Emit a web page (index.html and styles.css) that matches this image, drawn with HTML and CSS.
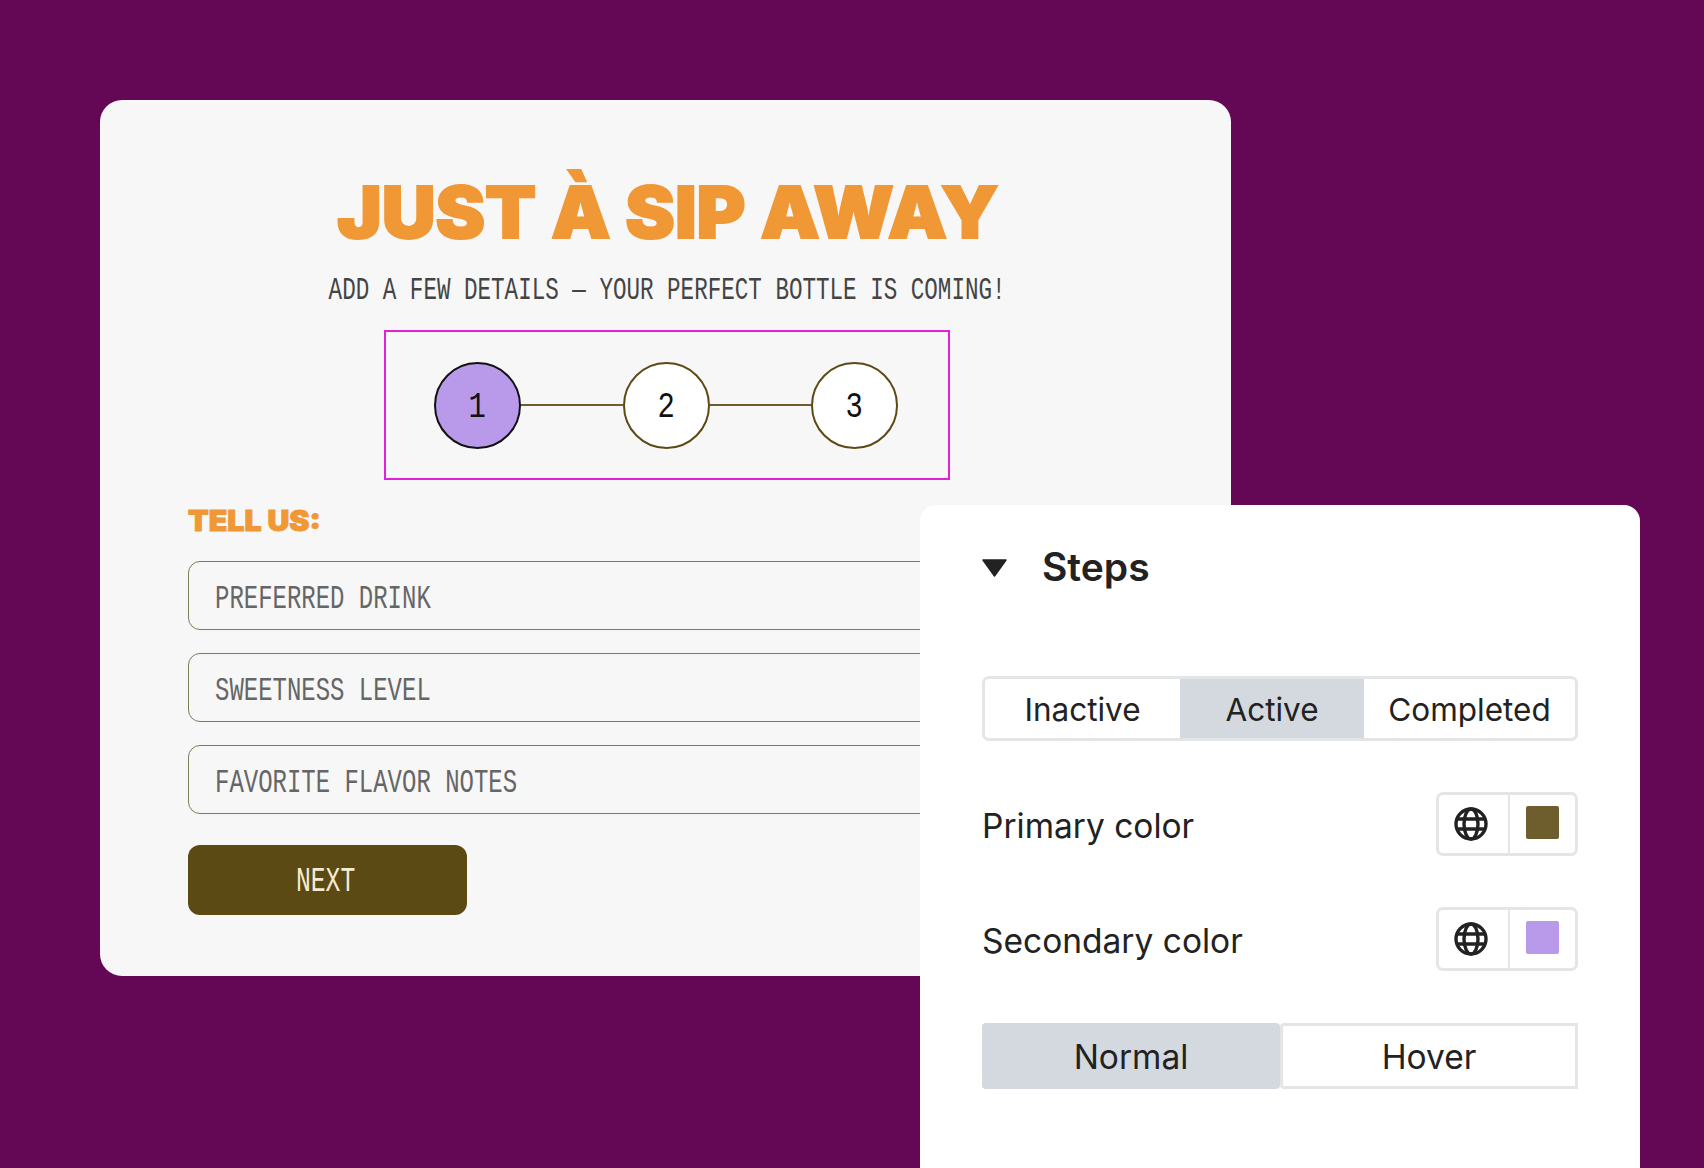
FILE: index.html
```html
<!DOCTYPE html>
<html lang="en">

<head>
    <meta charset="UTF-8">
    <meta name="viewport" content="width=device-width, initial-scale=1.0">
    <title>Steps</title>
    <link rel="stylesheet" href="styles.css">
</head>

<body>
    <div class="form-card">
        <h1><span class="title-text">JUST À SIP AWAY</span></h1>
        <p class="subtitle"><span class="squeeze">ADD A FEW DETAILS — YOUR PERFECT BOTTLE IS COMING!</span></p>
        <div class="stepper">
            <div class="step step-active"><span class="squeeze">1</span></div>
            <div class="step-line"></div>
            <div class="step"><span class="squeeze">2</span></div>
            <div class="step-line"></div>
            <div class="step"><span class="squeeze">3</span></div>
        </div>
        <h2><span class="title-text">TELL US:</span></h2>
        <div class="field"><span class="squeeze">PREFERRED DRINK</span></div>
        <div class="field"><span class="squeeze">SWEETNESS LEVEL</span></div>
        <div class="field"><span class="squeeze">FAVORITE FLAVOR NOTES</span></div>
        <button class="next-btn"><span class="squeeze">NEXT</span></button>
    </div>

    <div class="panel">
        <div class="panel-title">
            <svg class="caret" viewBox="0 0 25 18"><path d="M1 1 H24 L12.5 17 Z" stroke="#222" stroke-width="1.5" stroke-linejoin="round" fill="#222"/></svg>
            <span>Steps</span>
        </div>
        <div class="tabs">
            <div class="tab tab-inactive">Inactive</div>
            <div class="tab tab-active">Active</div>
            <div class="tab tab-completed">Completed</div>
        </div>
        <div class="color-row">
            <span>Primary color</span>
            <div class="color-picker">
                <div class="globe-cell">
                    <svg class="globe" viewBox="0 0 34 34"><circle cx="17" cy="17" r="15"/><ellipse cx="17" cy="17" rx="7" ry="15"/><path d="M3 12 H31 M3 22 H31"/></svg>
                </div>
                <div class="swatch-cell"><div class="swatch swatch-primary"></div></div>
            </div>
        </div>
        <div class="color-row color-row-second">
            <span>Secondary color</span>
            <div class="color-picker">
                <div class="globe-cell">
                    <svg class="globe" viewBox="0 0 34 34"><circle cx="17" cy="17" r="15"/><ellipse cx="17" cy="17" rx="7" ry="15"/><path d="M3 12 H31 M3 22 H31"/></svg>
                </div>
                <div class="swatch-cell"><div class="swatch swatch-secondary"></div></div>
            </div>
        </div>
        <div class="state-toggle">
            <div class="state state-on">Normal</div>
            <div class="state state-off">Hover</div>
        </div>
    </div>
</body>

</html>
```

FILE: styles.css
```css
body {
    margin: 0;
    height: 1168px;
    overflow: hidden;
    position: relative;
    background-color: #640856;
    font-family: Inter, "Noto Sans", sans-serif;
    color: #222;
}

/* mono text in the reference is narrower than Liberation Mono */
.squeeze {
    display: inline-block;
    white-space: nowrap;
    transform: scaleX(0.705);
}

/* and the display face is wider than Inter black */
.title-text {
    display: inline-block;
    white-space: nowrap;
    transform: scaleX(1.05);
}

.form-card {
    box-sizing: border-box;
    width: 1131px;
    height: 876px;
    margin: 100px 0 0 100px;
    padding: 0 81px 0 88px;
    background-color: #f7f7f7;
    border-radius: 22px;
    font-family: "Liberation Mono", monospace;
}

h1 {
    margin: 0 0 0 -2px;
    padding-top: 69px;
    text-align: center;
    font-family: Inter, sans-serif;
    font-weight: 900;
    font-size: 71px;
    line-height: 86px;
    color: #f09835;
    -webkit-text-stroke: 2px #f09835;
}

.subtitle {
    margin: 20px 0 0 -4px;
    text-align: center;
    font-size: 32px;
    line-height: 32px;
    color: #444;
}

.stepper {
    box-sizing: border-box;
    width: 566px;
    height: 150px;
    margin: 23px 0 0 196px;
    padding: 0 50px 0 48px;
    display: flex;
    align-items: center;
    border: 2px solid #e021d6;
}

.step {
    box-sizing: border-box;
    flex: none;
    width: 87px;
    height: 87px;
    padding-top: 3px;
    display: flex;
    align-items: center;
    justify-content: center;
    border: 2px solid #5c4a15;
    border-radius: 50%;
    background-color: #fff;
    font-size: 37px;
    color: #111;
}

.step .squeeze {
    transform: scaleX(0.78);
}

.step-active {
    background-color: #b899ea;
    border-color: #111;
}

.step-line {
    flex: 1;
    height: 2px;
    background-color: #6f5e2d;
}

h2 {
    margin: 24px 0 0;
    font-family: Inter, sans-serif;
    font-weight: 900;
    font-size: 28px;
    line-height: 34px;
    color: #f09835;
    -webkit-text-stroke: 1px #f09835;
}

h2 .title-text {
    transform: scaleX(1.08);
    transform-origin: left center;
}

.field {
    box-sizing: border-box;
    height: 69px;
    margin-top: 23px;
    padding: 7px 0 0 26px;
    display: flex;
    align-items: center;
    border: 1.5px solid #7d7d58;
    border-radius: 12px;
    font-size: 34px;
    color: #666;
}

.field .squeeze,
.next-btn .squeeze {
    transform-origin: left center;
}

.field:first-of-type {
    margin-top: 15px;
}

.next-btn {
    display: block;
    width: 279px;
    height: 70px;
    margin-top: 31px;
    padding: 4px 0 0 108px;
    text-align: left;
    border: none;
    border-radius: 12px;
    background-color: #5c4a15;
    color: #f5ecd0;
    font-family: "Liberation Mono", monospace;
    font-size: 35px;
}

.panel {
    box-sizing: border-box;
    position: absolute;
    top: 505px;
    left: 920px;
    width: 720px;
    height: 663px;
    padding: 0 62px;
    background-color: #fff;
    border-radius: 16px 16px 0 0;
    font-size: 33.5px;
}

.panel-title {
    display: flex;
    align-items: center;
    gap: 35px;
    height: 126px;
    font-size: 39px;
    font-weight: 600;
}

.panel-title span {
    padding-bottom: 4px;
}

.caret {
    width: 25px;
    height: 18px;
}

.tabs {
    box-sizing: border-box;
    height: 65px;
    margin-top: 45px;
    display: flex;
    border: 3px solid #e3e5e7;
    border-radius: 7px;
    font-size: 31.5px;
}

.tab {
    display: flex;
    align-items: center;
    justify-content: center;
    padding-top: 2px;
}

.tab-inactive {
    width: 195px;
}

.tab-active {
    width: 184px;
    background-color: #d3d9df;
}

.tab-completed {
    flex: 1;
}

.color-row {
    display: flex;
    align-items: center;
    justify-content: space-between;
    height: 64px;
    margin-top: 51px;
}

.color-row span {
    padding-top: 3px;
}

.color-row-second {
    margin-top: 51px;
}

.color-picker {
    box-sizing: border-box;
    display: flex;
    width: 142px;
    height: 64px;
    border: 3px solid #e3e5e7;
    border-radius: 7px;
}

.globe-cell {
    box-sizing: border-box;
    width: 71px;
    padding-right: 6px;
    display: flex;
    align-items: center;
    justify-content: center;
    border-right: 2px solid #e3e5e7;
}

.globe {
    width: 34px;
    height: 34px;
    fill: none;
    stroke: #222;
    stroke-width: 3.4;
}

.swatch-cell {
    flex: 1;
    padding-bottom: 3px;
    display: flex;
    align-items: center;
    justify-content: center;
}

.swatch {
    width: 33px;
    height: 33px;
    border-radius: 2px;
}

.swatch-primary {
    background-color: #6f5e2d;
}

.swatch-secondary {
    background-color: #b899ea;
}

.state-toggle {
    display: flex;
    height: 66px;
    margin-top: 52px;
}

.state {
    box-sizing: border-box;
    display: flex;
    align-items: center;
    justify-content: center;
    padding-top: 2px;
}

.state-on {
    flex: none;
    width: 298px;
    background-color: #d3d9df;
    border-radius: 4px;
}

.state-off {
    flex: 1;
    border: 3px solid #e3e5e7;
    border-radius: 4px 0 0 4px;
}
```
